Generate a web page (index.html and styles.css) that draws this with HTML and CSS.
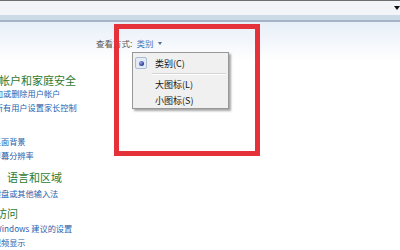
FILE: index.html
```html
<!DOCTYPE html>
<html lang="zh-CN">
<head>
<meta charset="utf-8">
<title>控制面板</title>
<link rel="stylesheet" href="styles.css">
</head>
<body>
<div class="page">
  <header class="addr">
    <div class="addr-main"><span class="drop"></span></div>
    <div class="band"></div>
  </header>
  <main class="content">
    <div class="viewbar">
      <span class="vb-label">查看方式:</span>
      <span class="vb-value">类别</span>
      <span class="vb-arrow"></span>
    </div>
    <div class="cats">
      <section class="cat cat-user">
        <h2 class="cat-title">用户帐户和家庭安全</h2>
        <a class="cat-link near">添加或删除用户帐户</a>
        <a class="cat-link near">为所有用户设置家长控制</a>
      </section>
      <section class="cat cat-look">
        <a class="cat-link">更改桌面背景</a>
        <a class="cat-link">调整屏幕分辨率</a>
      </section>
      <section class="cat cat-clock">
        <h2 class="cat-title">时钟、语言和区域</h2>
        <a class="cat-link">更改键盘或其他输入法</a>
      </section>
      <section class="cat cat-access">
        <h2 class="cat-title">轻松访问</h2>
        <a class="cat-link">使用 Windows 建议的设置</a>
        <a class="cat-link">优化视频显示</a>
      </section>
    </div>
    <div class="menu">
      <div class="menu-item checked"><span class="radio"><span class="dot"></span></span>类别(C)</div>
      <div class="menu-sep"></div>
      <div class="menu-item">大图标(L)</div>
      <div class="menu-item">小图标(S)</div>
    </div>
    <div class="mark"></div>
  </main>
</div>
</body>
</html>
```
FILE: styles.css
```css
* { margin: 0; padding: 0; box-sizing: border-box; }
html, body { width: 400px; height: 250px; overflow: hidden; background: #fff; }
body { font-family: "Noto Sans CJK SC", "Noto Sans", sans-serif; }
.page { height: 250px; overflow: hidden; }

.addr { height: 22px; border-top: 1px solid #6e6e6e; display: flex; flex-direction: column; }
.addr-main { height: 14px; background: #f3f4f7; display: flex; justify-content: flex-end; padding-top: 5px; }
.drop { width: 0; height: 0; border-left: 3px solid transparent; border-right: 3px solid transparent; border-top: 4px solid #111; }
.band { height: 7px; background: #ccd9e7; border-bottom: 2px solid #a4b4c6; }

.content { position: relative; height: 228px; padding-top: 14px; overflow: hidden; background: linear-gradient(#e8eff8, #ffffff 40px); }

.viewbar { display: flex; align-items: center; height: 14px; padding-left: 96px; font-size: 8.5px; line-height: 14px; white-space: nowrap; }
.vb-label { color: #555; }
.vb-value { color: #3b7bc2; margin-left: 4px; }
.vb-arrow { width: 0; height: 0; margin-left: 5px; border-left: 2.5px solid transparent; border-right: 2.5px solid transparent; border-top: 3px solid #4f6d8f; }

.cats { margin-top: 22.5px; }
.cat-title { font-size: 11px; line-height: 15px; font-weight: normal; color: #2d7a2f; margin-left: -26px; white-space: nowrap; }
.cat-link { display: block; font-size: 8.2px; line-height: 14px; color: #1f5fae; white-space: nowrap; margin-left: -23.6px; }
.cat-user .cat-title { margin-bottom: -2px; margin-left: -23px; }
.cat-link.near { margin-left: -13.4px; }
.cat-look { margin-top: 20.5px; }
.cat-clock { margin-top: 7.5px; }
.cat-clock .cat-title { margin-bottom: 1px; }
.cat-access { margin-top: 6px; }

.menu { position: absolute; left: 132px; top: 30px; width: 97px; height: 57px; background: #f0f0f0; border: 1px solid #979797; box-shadow: 2px 2px 2px rgba(0,0,0,0.35); padding: 2px 2px 0 2px; }
.menu-item { position: relative; height: 16px; display: flex; align-items: center; padding-left: 20px; font-size: 9px; color: #151515; white-space: nowrap; }
.radio { position: absolute; left: 0; top: 2px; width: 12px; height: 12px; border: 1px solid #aabdd4; border-radius: 2px; background: #e4ebf4; display: flex; align-items: center; justify-content: center; }
.dot { width: 5px; height: 5px; border-radius: 50%; background: radial-gradient(circle at 35% 35%, #9aa8e6, #22318c 75%); }
.menu-sep { height: 2px; margin: 2px 0 1px 17px; border-top: 1px solid #d5d5d5; border-bottom: 1px solid #ffffff; }

.mark { position: absolute; left: 114px; top: 2px; width: 146px; height: 132px; border: 5px solid #e5323a; }
```
